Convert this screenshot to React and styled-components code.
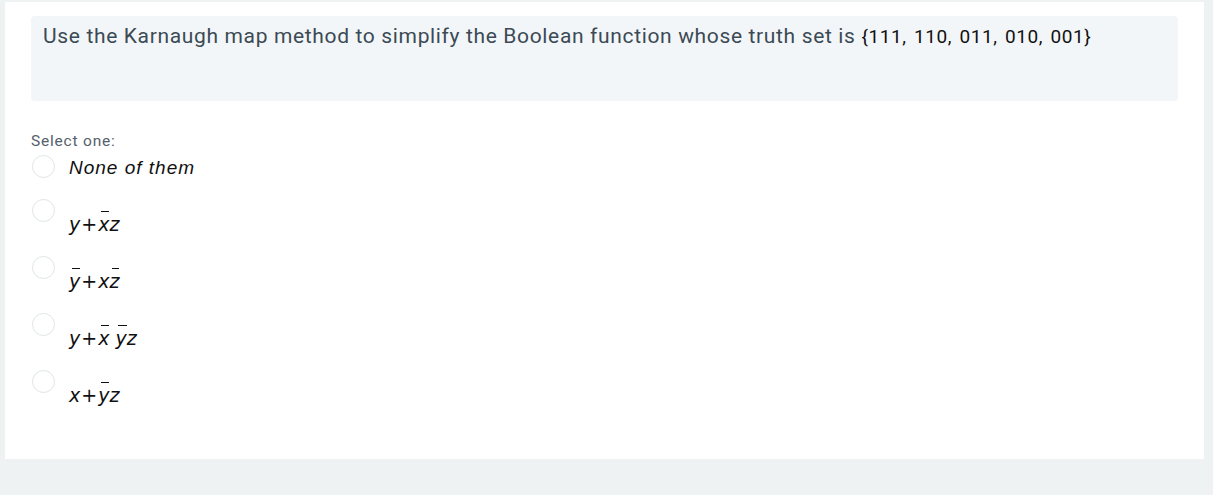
import React from "react"
import styled, { createGlobalStyle } from "styled-components"

const GlobalStyle = createGlobalStyle`
  html, body {
    margin: 0;
    padding: 0;
    background: #eef2f3;
  }
  body {
    font-family: Roboto, "Liberation Sans", sans-serif;
  }
`

const Page = styled.div`
  width: 1213px;
  height: 495px;
  padding: 2px 9px 0 5px;
  box-sizing: border-box;
`

const Card = styled.section`
  background: #fff;
  height: 457px;
  padding: 14px 26px 0 26px;
  box-sizing: border-box;
`

const QuestionBox = styled.div`
  background: #f3f6f9;
  border-radius: 4px;
  height: 85px;
  padding: 8px 12px;
  box-sizing: border-box;
`

const QuestionText = styled.p`
  margin: 0;
  color: #3b4a54;
  font-size: 21px;
  letter-spacing: 0.65px;
  line-height: 24px;
`

const SetText = styled.span`
  color: #111;
  font-size: 19px;
  letter-spacing: 0.6px;
  word-spacing: 2px;
`

const Prompt = styled.div`
  margin-top: 31px;
  color: #56616b;
  font-size: 15.5px;
  letter-spacing: 0.8px;
  line-height: 18px;
`

const Options = styled.div`
  margin-top: 5px;
  display: flex;
  flex-direction: column;
  gap: 20px;
`

const Row = styled.label`
  display: flex;
  align-items: flex-start;
  gap: 14px;
  cursor: pointer;
`

const Radio = styled.span`
  flex: none;
  width: 23px;
  height: 23px;
  margin-left: 1px;
  border: 1px solid #dfe5e7;
  border-radius: 50%;
  background: #fff;
  box-sizing: border-box;
`

const Label = styled.span`
  color: #111;
  font-size: 19px;
  line-height: 23px;
  padding-top: ${(p) => (p.$math ? "14px" : "1px")};
  font-family: ${(p) =>
    p.$math ? '"DejaVu Sans", sans-serif' : '"Liberation Sans", Arial, sans-serif'};
  letter-spacing: ${(p) => (p.$math ? "0" : "1px")};
  font-style: italic;
`

const Plus = styled.span`
  font-style: normal;
  margin: 0 1px;
`

const Bar = styled.span`
  position: relative;
  &::before {
    content: "";
    position: absolute;
    left: 3px;
    right: 0;
    top: -2px;
    border-top: 1.5px solid #111;
  }
`

const Gap = styled.span`
  display: inline-block;
  width: 6px;
`

const options = [
  { key: "none", text: "None of them" },
  {
    key: "a",
    math: (
      <>
        y<Plus>+</Plus>
        <Bar>x</Bar>z
      </>
    ),
  },
  {
    key: "b",
    math: (
      <>
        <Bar>y</Bar>
        <Plus>+</Plus>x<Bar>z</Bar>
      </>
    ),
  },
  {
    key: "c",
    math: (
      <>
        y<Plus>+</Plus>
        <Bar>x</Bar>
        <Gap />
        <Bar>y</Bar>z
      </>
    ),
  },
  {
    key: "d",
    math: (
      <>
        x<Plus>+</Plus>
        <Bar>y</Bar>z
      </>
    ),
  },
]

const App = () => {
  return (
    <>
      <GlobalStyle />
      <Page>
        <Card>
          <QuestionBox>
            <QuestionText>
              Use the Karnaugh map method to simplify the Boolean function whose truth set is{" "}
              <SetText>{"{111, 110, 011, 010, 001}"}</SetText>
            </QuestionText>
          </QuestionBox>
          <Prompt>Select one:</Prompt>
          <Options>
            {options.map((o) => (
              <Row key={o.key}>
                <Radio />
                <Label $math={!!o.math}>{o.math || o.text}</Label>
              </Row>
            ))}
          </Options>
        </Card>
      </Page>
    </>
  )
}

export default App
